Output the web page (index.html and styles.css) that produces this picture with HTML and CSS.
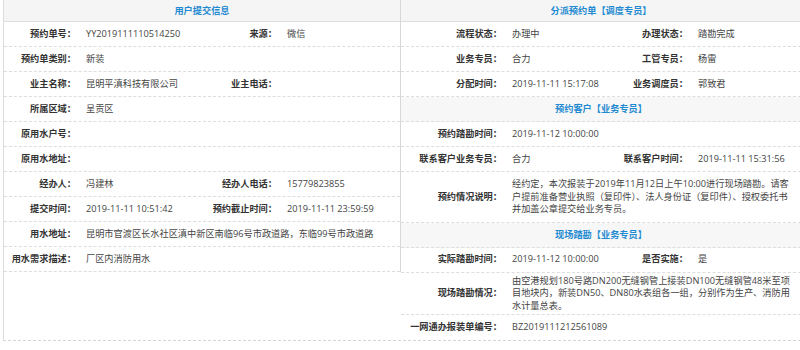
FILE: index.html
```html
<!DOCTYPE html>
<html lang="zh-CN">
<head>
<meta charset="utf-8">
<title>预约单详情</title>
<link rel="stylesheet" href="styles.css">
</head>
<body>
<div class="sheet">
  <section class="panel panel-left">
    <div class="head">用户提交信息</div>
    <div class="row"><span class="lbl">预约单号：</span><span class="val">YY2019111110514250</span><span class="lbl">来源：</span><span class="val">微信</span></div>
    <div class="row"><span class="lbl">预约单类别：</span><span class="val span3">新装</span></div>
    <div class="row"><span class="lbl">业主名称：</span><span class="val">昆明平滇科技有限公司</span><span class="lbl">业主电话：</span><span class="val"></span></div>
    <div class="row"><span class="lbl">所属区域：</span><span class="val span3">呈贡区</span></div>
    <div class="row"><span class="lbl">原用水户号：</span><span class="val span3"></span></div>
    <div class="row"><span class="lbl">原用水地址：</span><span class="val span3"></span></div>
    <div class="row"><span class="lbl">经办人：</span><span class="val">冯建林</span><span class="lbl">经办人电话：</span><span class="val">15779823855</span></div>
    <div class="row"><span class="lbl">提交时间：</span><span class="val">2019-11-11 10:51:42</span><span class="lbl">预约截止时间：</span><span class="val">2019-11-11 23:59:59</span></div>
    <div class="row"><span class="lbl">用水地址：</span><span class="val span3">昆明市官渡区长水社区滇中新区南临96号市政道路，东临99号市政道路</span></div>
    <div class="row"><span class="lbl">用水需求描述：</span><span class="val span3">厂区内消防用水</span></div>
  </section>
  <section class="panel panel-right">
    <div class="head">分派预约单【调度专员】</div>
    <div class="row"><span class="lbl">流程状态：</span><span class="val">办理中</span><span class="lbl">办理状态：</span><span class="val">踏勘完成</span></div>
    <div class="row"><span class="lbl">业务专员：</span><span class="val">合力</span><span class="lbl">工管专员：</span><span class="val">杨雷</span></div>
    <div class="row"><span class="lbl">分配时间：</span><span class="val">2019-11-11 15:17:08</span><span class="lbl">业务调度员：</span><span class="val">郭致君</span></div>
    <div class="head sub">预约客户【业务专员】</div>
    <div class="row"><span class="lbl">预约踏勘时间：</span><span class="val span3">2019-11-12 10:00:00</span></div>
    <div class="row"><span class="lbl">联系客户业务专员：</span><span class="val">合力</span><span class="lbl">联系客户时间：</span><span class="val">2019-11-11 15:31:56</span></div>
    <div class="row multi loose"><span class="lbl">预约情况说明：</span><span class="val span3 text">经约定，本次报装于2019年11月12日上午10:00进行现场踏勘。请客<br>户提前准备营业执照（复印件）、法人身份证（复印件）、授权委托书<br>并加盖公章提交给业务专员。</span></div>
    <div class="head sub">现场踏勘【业务专员】</div>
    <div class="row"><span class="lbl">实际踏勘时间：</span><span class="val">2019-11-12 10:00:00</span><span class="lbl">是否实施：</span><span class="val">是</span></div>
    <div class="row multi tight"><span class="lbl">现场踏勘情况：</span><span class="val span3 text">由空港规划180号路DN200无缝钢管上接装DN100无缝钢管48米至项<br>目地块内，新装DN50、DN80水表组各一组，分别作为生产、消防用<br>水计量总表。</span></div>
    <div class="row last"><span class="lbl">一网通办报装单编号：</span><span class="val span3">BZ2019111212561089</span></div>
  </section>
</div>
</body>
</html>
```

FILE: styles.css
```css
html, body {
  margin: 0;
  padding: 0;
  background: #ffffff;
}

body {
  font-family: "Open Sans", "Noto Sans CJK SC", sans-serif;
  font-size: 9.2px;
  color: #333333;
}

.sheet {
  margin-left: 3px;
  width: 797px;
  border-left: 1px solid #dddddd;
  border-bottom: 1px dashed #d6d6d6;
  display: grid;
  grid-template-columns: 397px 1fr;
  align-items: start;
}

.panel-left {
  border-right: 1px solid #d8d8d8;
}

.head {
  height: 22px;
  line-height: 22px;
  background: #f5f5f5;
  border-bottom: 1px solid #dedede;
  box-sizing: border-box;
  text-align: center;
  color: #1f8ad2;
  font-weight: bold;
}

.head.sub {
  height: 25px;
  line-height: 24px;
  background: #f7f7f7;
  border-bottom: 1px dashed #dddddd;
}

.row {
  display: grid;
  align-items: center;
  min-height: 25px;
  box-sizing: border-box;
  border-bottom: 1px dashed #dddddd;
  line-height: 12.5px;
}

.panel-left .row {
  grid-template-columns: 72px 124px 77px 1fr;
}

.panel-right .row {
  grid-template-columns: 101px 97px 89px 1fr;
}

.row.last {
  border-bottom: none;
}

.row.multi.loose {
  padding: 6px 0;
}

.row.multi.tight {
  padding: 2px 0;
}

.lbl {
  text-align: right;
  font-weight: bold;
  color: #333333;
  white-space: nowrap;
}

.val {
  padding-left: 10px;
  color: #444444;
  white-space: nowrap;
}

.val.span3 {
  grid-column: span 3;
}

.val.text {
  white-space: nowrap;
}
```
